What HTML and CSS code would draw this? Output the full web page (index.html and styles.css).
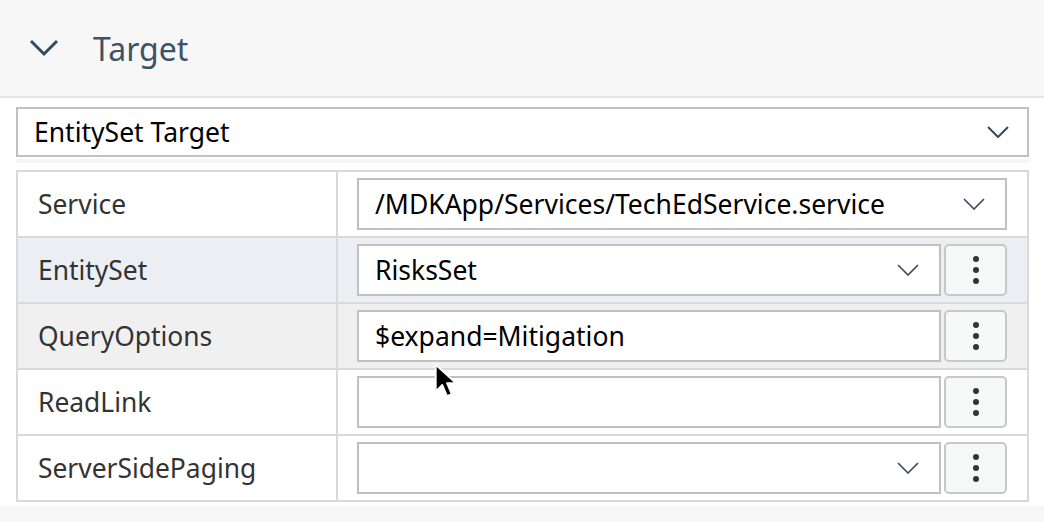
FILE: index.html
```html
<!DOCTYPE html>
<html>
<head>
<meta charset="utf-8">
<link rel="stylesheet" href="styles.css">
</head>
<body>
<div class="page">
  <div class="header">
    <svg class="header-chev" width="30" height="18" viewBox="0 0 30 18"><path d="M2 2 L15 15 L28 2" fill="none" stroke="#354a5f" stroke-width="3"/></svg>
    <span class="header-title">Target</span>
  </div>
  <div class="content">
    <div class="select top-select">
      <span class="select-text">EntitySet Target</span>
      <svg class="chev" width="22" height="12" viewBox="0 0 22 12"><path d="M1 1 L11 11 L21 1" fill="none" stroke="#354a5f" stroke-width="2"/></svg>
    </div>
    <div class="strip"></div>
    <div class="table">
      <div class="row">
        <div class="label">Service</div>
        <div class="value">
          <div class="select field">
            <span class="select-text">/MDKApp/Services/TechEdService.service</span>
            <svg class="chev" width="22" height="12" viewBox="0 0 22 12"><path d="M1 1 L11 11 L21 1" fill="none" stroke="#354a5f" stroke-width="1.6"/></svg>
          </div>
        </div>
      </div>
      <div class="row row-selected">
        <div class="label">EntitySet</div>
        <div class="value">
          <div class="select field">
            <span class="select-text">RisksSet</span>
            <svg class="chev" width="22" height="12" viewBox="0 0 22 12"><path d="M1 1 L11 11 L21 1" fill="none" stroke="#354a5f" stroke-width="1.6"/></svg>
          </div>
          <div class="more"><span class="dot"></span><span class="dot"></span><span class="dot"></span></div>
        </div>
      </div>
      <div class="row row-hover">
        <div class="label">QueryOptions</div>
        <div class="value">
          <div class="select field">
            <span class="select-text">$expand=Mitigation</span>
          </div>
          <div class="more"><span class="dot"></span><span class="dot"></span><span class="dot"></span></div>
        </div>
      </div>
      <div class="row">
        <div class="label">ReadLink</div>
        <div class="value">
          <div class="select field"></div>
          <div class="more"><span class="dot"></span><span class="dot"></span><span class="dot"></span></div>
        </div>
      </div>
      <div class="row row-last">
        <div class="label">ServerSidePaging</div>
        <div class="value">
          <div class="select field">
            <span class="select-text"></span>
            <svg class="chev" width="22" height="12" viewBox="0 0 22 12"><path d="M1 1 L11 11 L21 1" fill="none" stroke="#354a5f" stroke-width="1.6"/></svg>
          </div>
          <div class="more"><span class="dot"></span><span class="dot"></span><span class="dot"></span></div>
        </div>
      </div>
    </div>
  </div>
  <div class="footer"></div>
  <svg class="cursor" width="26" height="38" viewBox="0 0 22 32"><path d="M1.5 1.5 L1.5 24 L7 18.5 L11 28 L15 26.3 L11 17 L18.5 17 Z" fill="#000" stroke="#fff" stroke-width="1.5" stroke-linejoin="round"/></svg>
</div>
</body>
</html>
```
FILE: styles.css
```css
* { box-sizing: border-box; }
html, body { margin: 0; padding: 0; background: #ffffff; }
body { font-family: "Noto Sans", "Open Sans", sans-serif; color: #333; }
.page { position: relative; width: 1044px; height: 522px; overflow: hidden; background: #fff; }
.header {
  height: 98px;
  background: #f7f7f7;
  border-bottom: 2px solid #e5e5e5;
  display: flex;
  align-items: center;
  padding-left: 29px;
}
.header-chev { margin-right: 34px; }
.header-title { font-size: 32px; color: #3e5266; }
.content { padding: 9px 15px 0 16px; }
.select {
  display: flex;
  align-items: center;
  border: 2px solid #c0c0c0;
  background: #fff;
}
.top-select { height: 50px; padding: 0 18px 0 16px; }
.select-text { flex: 1; font-size: 26.5px; color: #000; white-space: nowrap; }
.chev { flex: none; }
.strip { height: 4px; margin-top: 2px; background: #f5f5f5; }
.table { margin-top: 7px; border: 2px solid #d9d9d9; }
.row { display: grid; grid-template-columns: 320px 1fr; height: 66px; border-bottom: 2px solid #d9d9d9; background: #fff; }
.row-last { border-bottom: none; height: 64px; }
.row-selected { background: #ebeef3; }
.row-hover { background: #f0f0f0; }
.label { display: flex; align-items: center; padding-left: 20px; font-size: 26.4px; color: #333; border-right: 2px solid #d9d9d9; }
.value { display: flex; align-items: center; gap: 3px; padding: 0 20px 0 19px; }
.field { flex: 1; height: 52px; padding: 0 20px 0 16px; }
.more {
  flex: none;
  width: 63px;
  height: 52px;
  border: 2px solid #c8c8c8;
  border-radius: 5px;
  background: #f7f8f8;
  display: flex;
  flex-direction: column;
  align-items: center;
  justify-content: center;
  gap: 5px;
}
.dot { width: 6px; height: 6px; border-radius: 50%; background: #333; }
.footer { height: 20px; margin-top: 4px; background: #f7f7f7; }
.cursor { position: absolute; left: 434px; top: 363px; }
```
